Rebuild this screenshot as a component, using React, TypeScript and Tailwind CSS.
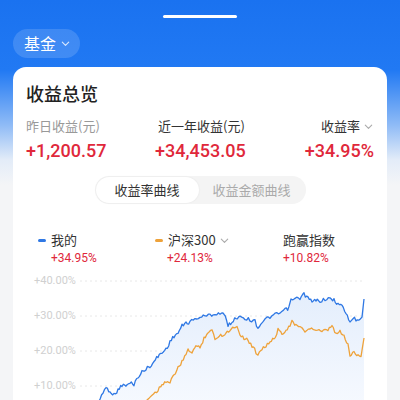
import React from "react";

const BLUE_KEYS: [number, number][] = [
  [82, 425], [96, 408], [103, 392], [106, 388], [110, 391], [114, 395], [118, 390],
  [122, 385], [126, 386], [130, 383], [134, 384], [138, 377], [142, 372], [146, 369],
  [150, 366], [154, 362], [158, 356], [162, 353], [166, 349], [170, 342], [174, 336],
  [178, 333], [182, 326], [186, 323], [190, 322], [195, 319], [200, 317], [205, 316],
  [210, 315], [215, 314], [220, 313], [224, 314], [228, 325], [232, 322], [236, 318],
  [240, 316], [245, 318], [250, 320], [255, 321], [258, 328], [262, 322], [266, 319],
  [270, 317], [275, 315], [280, 313], [285, 310], [289, 308], [291, 300], [295, 299],
  [300, 298], [304, 294], [308, 298], [312, 302], [316, 300], [320, 301], [325, 299],
  [330, 299], [334, 300], [338, 304], [342, 306], [346, 313], [350, 322], [353, 318],
  [356, 320], [360, 318], [362, 316], [364, 299],
];

const ORANGE_KEYS: [number, number][] = [
  [140, 425], [147, 400], [152, 395], [158, 390], [162, 384], [166, 381], [170, 383],
  [174, 375], [178, 368], [182, 362], [186, 355], [188, 350], [192, 352], [196, 346],
  [200, 348], [204, 338], [208, 332], [212, 330], [215, 340], [218, 336], [222, 335],
  [226, 333], [230, 330], [234, 327], [237, 326], [240, 334], [244, 338], [248, 340],
  [252, 346], [256, 352], [258, 354], [262, 348], [266, 346], [270, 342], [274, 339],
  [278, 330], [282, 333], [286, 330], [290, 325], [292, 322], [296, 325], [300, 328],
  [305, 331], [310, 328], [316, 330], [322, 332], [328, 330], [332, 326], [336, 334],
  [340, 332], [344, 336], [348, 345], [350, 356], [354, 352], [358, 355], [361, 356],
  [364, 338],
];

// chart svg sits at page (80, 274)
const OX = 80;
const OY = 274;

function noise(i: number, seed: number) {
  const s = Math.sin(i * 12.9898 + seed * 78.233) * 43758.5453;
  return s - Math.floor(s) - 0.5;
}

function buildLine(keys: [number, number][], seed: number) {
  const pts: [number, number][] = [];
  let i = 0;
  for (let k = 0; k < keys.length - 1; k++) {
    const [x0, y0] = keys[k];
    const [x1, y1] = keys[k + 1];
    const steps = Math.max(1, Math.round((x1 - x0) / 1.5));
    for (let s = 0; s < steps; s++) {
      const t = s / steps;
      const x = x0 + (x1 - x0) * t;
      const y = y0 + (y1 - y0) * t + (k > 0 ? noise(i, seed) * 3.6 : 0);
      pts.push([x - OX, y - OY]);
      i++;
    }
  }
  const last = keys[keys.length - 1];
  pts.push([last[0] - OX, last[1] - OY]);
  return pts;
}

const bluePts = buildLine(BLUE_KEYS, 1);
const orangePts = buildLine(ORANGE_KEYS, 2);

const toStr = (pts: [number, number][]) =>
  pts.map(([x, y]) => `${x.toFixed(1)},${y.toFixed(1)}`).join(" ");

function Chevron({ className }: { className?: string }) {
  return (
    <svg className={className} viewBox="0 0 12 12" fill="none" stroke="currentColor" strokeWidth={1.2}>
      <path d="M2.5 4.5 6 8l3.5-3.5" strokeLinecap="round" strokeLinejoin="round" />
    </svg>
  );
}

function ProfitChart() {
  const blue = toStr(bluePts);
  const area = `${blue} ${bluePts[bluePts.length - 1][0].toFixed(1)},140 ${bluePts[0][0].toFixed(1)},140`;
  return (
    <svg width="286" height="140" viewBox="0 0 286 140" className="block">
      <defs>
        <linearGradient id="fillBlue" x1="0" y1="0" x2="0" y2="1">
          <stop offset="0%" stopColor="#e4eefc" />
          <stop offset="100%" stopColor="#f9fbff" />
        </linearGradient>
      </defs>
      {[7, 42, 77, 112].map((y) => (
        <line key={y} x1="0" x2="285" y1={y} y2={y} stroke="#e8e8e8" strokeWidth="1" strokeDasharray="2 3" />
      ))}
      <polygon points={area} fill="url(#fillBlue)" />
      <polyline points={toStr(orangePts)} fill="none" stroke="#eea23a" strokeWidth="1.3" strokeLinejoin="round" />
      <polyline points={blue} fill="none" stroke="#2f78e4" strokeWidth="1.3" strokeLinejoin="round" />
    </svg>
  );
}

export default function App() {
  const num = { fontFamily: "Roboto, 'Noto Sans CJK SC', sans-serif" };
  return (
    <div
      className="w-[400px] h-[400px] overflow-hidden bg-[linear-gradient(180deg,#1a72f0_0px,#2179f3_70px,#8fbbf6_125px,#e3ecf8_160px,#f4f5f7_185px,#f4f5f7_100%)]"
      style={{ fontFamily: "'Noto Sans CJK SC', 'Noto Sans', sans-serif" }}
    >
      {/* tab indicator */}
      <div className="pt-[15px] flex justify-center">
        <div className="w-[74px] h-[3px] rounded-full bg-white" />
      </div>

      {/* fund selector */}
      <div className="px-[13px] mt-[11px]">
        <div className="inline-flex items-center h-[29px] pl-[11px] pr-[9px] rounded-full bg-white/15 text-white">
          <span className="text-[16px] leading-[29px]">基金</span>
          <Chevron className="w-[11px] h-[11px] ml-[4px] text-white/80" />
        </div>
      </div>

      {/* card */}
      <div className="mx-[13px] mt-[9px] bg-white rounded-[13px] pt-[14px] px-[13px] pb-[20px]">
        <div className="text-[18px] leading-[24px] font-medium text-[#222]">收益总览</div>

        <div className="grid grid-cols-[129px_1fr_auto] mt-[12px]">
          <div>
            <div className="text-[13px] leading-[18px] text-[#999]">昨日收益(元)</div>
            <div className="mt-[4px] text-[18px] leading-[24px] font-medium text-[#e0283b]" style={num}>
              +1,200.57
            </div>
          </div>
          <div>
            <div className="text-[13px] leading-[18px] text-[#333] pl-[3px]">近一年收益(元)</div>
            <div className="mt-[4px] text-[18px] leading-[24px] font-medium text-[#e0283b]" style={num}>
              +34,453.05
            </div>
          </div>
          <div className="flex flex-col items-end">
            <div className="flex items-center text-[13px] leading-[18px] text-[#333]">
              收益率
              <Chevron className="w-[11px] h-[11px] ml-[3px] text-[#aaa]" />
            </div>
            <div className="mt-[4px] text-[18px] leading-[24px] font-medium text-[#e0283b]" style={num}>
              +34.95%
            </div>
          </div>
        </div>

        {/* curve toggle */}
        <div className="flex justify-center mt-[13px]">
          <div className="flex h-[28px] w-[211px] rounded-full bg-[#f4f4f4] p-[1px]">
            <div className="w-[103px] rounded-full bg-white shadow-[0_0_2px_rgba(0,0,0,0.08)] flex items-center justify-center text-[13px] text-[#333]">
              收益率曲线
            </div>
            <div className="flex-1 flex items-center justify-center text-[13px] text-[#aaa]">收益金额曲线</div>
          </div>
        </div>

        {/* legend */}
        <div className="grid grid-cols-[117px_128px_1fr] pl-[12px] mt-[27px]">
          <div>
            <div className="flex items-center text-[13px] leading-[18px] text-[#333]">
              <span className="w-[8px] h-[3px] rounded-full bg-[#2f78e4] mr-[5px]" />
              我的
            </div>
            <div className="pl-[13px] mt-[1px] text-[12px] leading-[16px] text-[#e0283b]" style={num}>
              +34.95%
            </div>
          </div>
          <div>
            <div className="flex items-center text-[13px] leading-[18px] text-[#333]">
              <span className="w-[8px] h-[3px] rounded-full bg-[#eea23a] mr-[5px]" />
              沪深300
              <Chevron className="w-[11px] h-[11px] ml-[3px] text-[#aaa]" />
            </div>
            <div className="pl-[12px] mt-[1px] text-[12px] leading-[16px] text-[#e0283b]" style={num}>
              +24.13%
            </div>
          </div>
          <div>
            <div className="text-[13px] leading-[18px] text-[#333]">跑赢指数</div>
            <div className="mt-[1px] text-[12px] leading-[16px] text-[#e0283b]" style={num}>
              +10.82%
            </div>
          </div>
        </div>

        {/* chart */}
        <div className="flex mt-[8px]">
          <div className="w-[54px] pl-[8px] flex flex-col gap-[22px] text-[11px] text-[#d0d0d0]" style={num}>
            <div className="h-[13px] leading-[13px]">+40.00%</div>
            <div className="h-[13px] leading-[13px]">+30.00%</div>
            <div className="h-[13px] leading-[13px]">+20.00%</div>
            <div className="h-[13px] leading-[13px]">+10.00%</div>
          </div>
          <ProfitChart />
        </div>
      </div>
    </div>
  );
}
